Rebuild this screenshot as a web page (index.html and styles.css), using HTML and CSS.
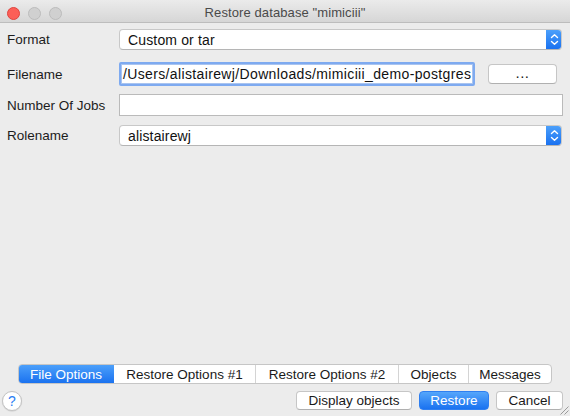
FILE: index.html
```html
<!DOCTYPE html>
<html>
<head>
<meta charset="utf-8">
<link rel="stylesheet" href="styles.css">
</head>
<body>
<div class="window">
  <div class="titlebar">
    <div class="lights">
      <span class="light red"></span>
      <span class="light gray"></span>
      <span class="light gray"></span>
    </div>
    <div class="title">Restore database "mimiciii"</div>
  </div>

  <div class="form">
    <div class="row row-format">
      <div class="label">Format</div>
      <div class="combo">
        <span class="combo-text">Custom or tar</span>
        <span class="stepper">
          <svg width="9" height="13" viewBox="0 0 9 13"><path d="M1.5 4.5 L4.5 1.8 L7.5 4.5 M1.5 8.5 L4.5 11.2 L7.5 8.5" fill="none" stroke="#fff" stroke-width="1.4" stroke-linecap="round" stroke-linejoin="round"/></svg>
        </span>
      </div>
    </div>
    <div class="row row-file">
      <div class="label">Filename</div>
      <div class="file-group">
        <div class="input focus"><span class="input-text">/Users/alistairewj/Downloads/mimiciii_demo-postgres</span></div>
        <div class="btn dots">...</div>
      </div>
    </div>
    <div class="row row-jobs">
      <div class="label">Number Of Jobs</div>
      <div class="input plain"></div>
    </div>
    <div class="row row-role">
      <div class="label">Rolename</div>
      <div class="combo">
        <span class="combo-text">alistairewj</span>
        <span class="stepper">
          <svg width="9" height="13" viewBox="0 0 9 13"><path d="M1.5 4.5 L4.5 1.8 L7.5 4.5 M1.5 8.5 L4.5 11.2 L7.5 8.5" fill="none" stroke="#fff" stroke-width="1.4" stroke-linecap="round" stroke-linejoin="round"/></svg>
        </span>
      </div>
    </div>
  </div>

  <div class="tabs-wrap">
    <div class="tabs">
      <div class="tab selected t1">File Options</div>
      <div class="tab t2">Restore Options #1</div>
      <div class="tab t3">Restore Options #2</div>
      <div class="tab t4">Objects</div>
      <div class="tab t5">Messages</div>
    </div>
  </div>

  <div class="footer">
    <div class="help">?</div>
    <div class="buttons">
      <div class="btn b-display">Display objects</div>
      <div class="btn primary b-restore">Restore</div>
      <div class="btn b-cancel">Cancel</div>
    </div>
    <svg class="grip" width="12" height="12" viewBox="0 0 12 12"><path d="M11.5 3.5 L3.5 11.5 M11.5 7.5 L7.5 11.5" stroke="#9a9a9a" stroke-width="1" fill="none"/></svg>
  </div>
</div>
</body>
</html>
```

FILE: styles.css
```css
html, body {
  margin: 0;
  padding: 0;
}
body {
  font-family: "Liberation Sans", Arial, sans-serif;
  font-size: 13px;
  color: #1a1a1a;
  background: #ececec;
}
.window {
  width: 570px;
  height: 416px;
  display: flex;
  flex-direction: column;
  background: #ececec;
  overflow: hidden;
}
.titlebar {
  position: relative;
  height: 22px;
  flex: none;
  background: linear-gradient(#ebebeb, #d6d6d6);
  border-bottom: 1px solid #bdbdbd;
  display: flex;
  align-items: center;
  justify-content: center;
}
.lights {
  position: absolute;
  left: 7px;
  top: 7px;
  display: flex;
  gap: 8px;
}
.light {
  width: 11px;
  height: 11px;
  border-radius: 50%;
  display: block;
}
.light.red {
  background: #fc5f57;
  border: 0.5px solid #e0443e;
}
.light.gray {
  background: #d0d0d0;
  border: 0.5px solid #bcbcbc;
}
.title {
  font-size: 13px;
  color: #4a4a4a;
  padding-top: 2px;
  letter-spacing: 0.1px;
}

.form {
  display: flex;
  flex-direction: column;
  padding: 6px 8px 0 7px;
}
.row {
  display: flex;
  align-items: center;
}
.label {
  width: 112px;
  flex: none;
  font-size: 13.5px;
  color: #1c1c1c;
}
.row-format { height: 21px; }
.row-file { height: 24px; margin-top: 12px; }
.row-jobs { height: 22px; margin-top: 8px; }
.row-role { height: 21px; margin-top: 9px; }

.combo {
  flex: 1;
  height: 21px;
  box-sizing: border-box;
  background: #fff;
  border: 1px solid #c8c8c8;
  border-bottom-color: #b5b5b5;
  border-radius: 4px;
  display: flex;
  align-items: center;
  overflow: hidden;
}
.combo-text {
  flex: 1;
  padding-left: 8px;
  font-size: 14px;
  letter-spacing: 0.15px;
  color: #111;
}
.stepper {
  width: 16px;
  align-self: stretch;
  background: linear-gradient(#4ea2fb, #176ff0);
  display: flex;
  align-items: center;
  justify-content: center;
  margin: -1px -1px -1px 0;
  border-radius: 0 4px 4px 0;
}

.file-group {
  flex: 1;
  display: flex;
  align-items: center;
  gap: 13px;
}
.input {
  box-sizing: border-box;
  background: #fff;
  overflow: hidden;
  white-space: nowrap;
}
.input.focus {
  width: 356px;
  height: 24px;
  border: 2px solid #7eaaf0;
  border-radius: 2px;
  display: flex;
  align-items: center;
  padding-left: 2px;
  box-shadow: inset 0 0 0 1px #a9c4f0;
}
.input-text {
  font-size: 14px;
  letter-spacing: 0.36px;
  color: #111;
}
.input.plain {
  flex: 1;
  height: 22px;
  border: 1px solid #bababa;
  margin-right: -1px;
}

.btn {
  box-sizing: border-box;
  background: #fff;
  border: 1px solid #c6c6c6;
  border-bottom-color: #b0b0b0;
  border-radius: 4px;
  display: flex;
  align-items: center;
  justify-content: center;
  font-size: 13.5px;
  color: #1a1a1a;
}
.btn.dots {
  width: 69px;
  height: 20px;
  padding-bottom: 3px;
  font-size: 15px;
  letter-spacing: 0.5px;
}

.tabs-wrap {
  margin-top: auto;
  display: flex;
  justify-content: center;
}
.tabs {
  display: flex;
  height: 20px;
  box-sizing: border-box;
  border: 1px solid #c6c6c6;
  border-radius: 4px;
  background: #fff;
  overflow: hidden;
}
.tab {
  display: flex;
  align-items: center;
  justify-content: center;
  font-size: 13.5px;
  color: #1a1a1a;
  border-left: 1px solid #d4d4d4;
  box-sizing: border-box;
}
.tab.selected {
  background: linear-gradient(#4ea2fb, #1870ef);
  color: #fff;
  border-left: none;
  margin: -1px 0 -1px -1px;
}
.t1 { width: 96px; }
.t2 { width: 141px; border-left: none; }
.t3 { width: 143px; }
.t4 { width: 70px; }
.t5 { width: 83px; }

.footer {
  position: relative;
  height: 24px;
  margin-top: 4px;
  margin-bottom: 4px;
  display: flex;
  align-items: center;
  padding: 0 7px 0 2px;
}
.help {
  width: 20px;
  height: 20px;
  box-sizing: border-box;
  border-radius: 50%;
  background: #fff;
  border: 1px solid #c4c4c4;
  box-shadow: 0 0.5px 1px rgba(0,0,0,0.15);
  color: #2a7ef4;
  font-size: 14px;
  display: flex;
  align-items: center;
  justify-content: center;
  margin-top: 2px;
}
.buttons {
  margin-left: auto;
  display: flex;
  gap: 7px;
}
.buttons .btn {
  height: 19px;
}
.b-display { width: 116px; }
.b-restore { width: 70px; }
.b-cancel { width: 67px; }
.btn.primary {
  background: linear-gradient(#55a6fb, #1a72f0);
  border-color: #2f7ff0;
  color: #fff;
}
.grip {
  position: absolute;
  right: 1px;
  bottom: -3px;
}
```
